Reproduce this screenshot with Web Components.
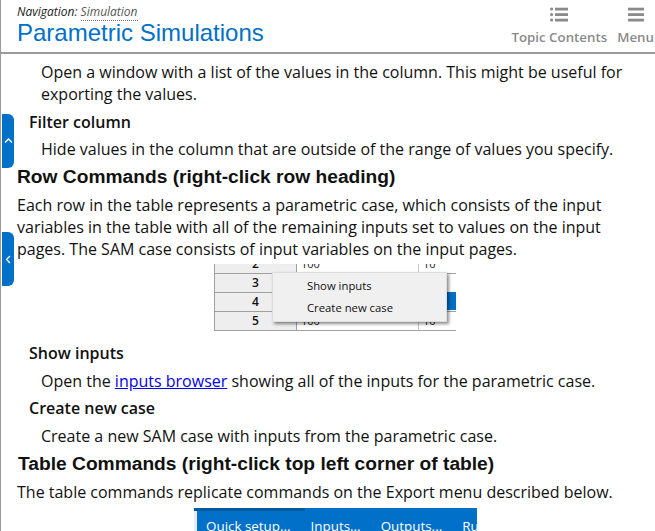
<!DOCTYPE html>
<html>
<head>
<meta charset="utf-8">
<title>Parametric Simulations</title>
<style>
    html, body { margin: 0; padding: 0; height: 100%; overflow: hidden; background: #fff; }
    body { font-family: "Open Sans", sans-serif; color: #111; }
</style>
</head>
<body>
<help-page>
    <help-header slot="header" title="Parametric Simulations" nav="Simulation"></help-header>
    <side-tab dir="up" style="top:114px"></side-tab>
    <side-tab dir="left" style="top:232px"></side-tab>

    <help-dd>Open a window with a list of the values in the column. This might be useful for exporting the values.</help-dd>
    <help-dt style="margin-top:6px">Filter column</help-dt>
    <help-dd style="margin-top:5px">Hide values in the column that are outside of the range of values you specify.</help-dd>
    <help-h2 style="margin-top:5px">Row Commands (right-click row heading)</help-h2>
    <help-p style="margin-top:5px">Each row in the table represents a parametric case, which consists of the input variables in the table with all of the remaining inputs set to values on the input pages. The SAM case consists of input variables on the input pages.</help-p>
    <row-shot style="margin-top:4px"></row-shot>
    <help-dt style="margin-top:9px">Show inputs</help-dt>
    <help-dd style="margin-top:6px">Open the <a href="#">inputs browser</a> showing all of the inputs for the parametric case.</help-dd>
    <help-dt style="margin-top:5px">Create new case</help-dt>
    <help-dd style="margin-top:6px">Create a new SAM case with inputs from the parametric case.</help-dd>
    <help-h2 style="margin-top:5px;padding-left:1px">Table Commands (right-click top left corner of table)</help-h2>
    <help-p style="margin-top:5px">The table commands replicate commands on the Export menu described below.</help-p>
    <toolbar-shot style="margin-top:5px"></toolbar-shot>
</help-page>

<script>
class HelpPage extends HTMLElement {
    constructor() {
        super();
        this.attachShadow({ mode: 'open' });
        this.shadowRoot.innerHTML = `
            <style>
                :host {
                    display: flex;
                    flex-direction: column;
                    position: relative;
                    height: 531px;
                    overflow: hidden;
                    border-left: 1px solid #9a9a9a;
                    box-sizing: border-box;
                }
                .topline {
                    position: absolute;
                    left: -1px;
                    top: 0;
                    width: 1px;
                    height: 52px;
                    background: #5fa3dc;
                }
                .content {
                    flex: 1;
                    overflow: hidden;
                    padding: 7px 16px 0 16px;
                }
            </style>
            <div class="topline"></div>
            <slot name="header"></slot>
            <div class="content"><slot></slot></div>
        `;
    }
}

class HelpHeader extends HTMLElement {
    constructor() {
        super();
        this.attachShadow({ mode: 'open' });
    }

    connectedCallback() {
        const title = this.getAttribute('title');
        const nav = this.getAttribute('nav');
        this.shadowRoot.innerHTML = `
            <style>
                :host {
                    display: flex;
                    justify-content: space-between;
                    height: 52px;
                    border-bottom: 2px solid #9a9a9a;
                    padding-left: 16px;
                    flex: none;
                }
                .nav {
                    font: italic 12px/14px "Open Sans", sans-serif;
                    margin-top: 5px;
                    color: #222;
                }
                .nav span {
                    color: #555;
                    border-bottom: 1px dotted #777;
                }
                h1 {
                    margin: 0;
                    font: normal 24px/28px "Liberation Sans", sans-serif;
                    color: #0070c8;
                }
                .tools {
                    display: flex;
                    gap: 10px;
                    padding-top: 7px;
                    margin-right: 1px;
                }
                .tool {
                    display: flex;
                    flex-direction: column;
                    align-items: center;
                    gap: 6px;
                    font: 600 13.3px/18px "Open Sans", sans-serif;
                    color: #8a8a8a;
                    white-space: nowrap;
                }
                svg { display: block; }
            </style>
            <div>
                <div class="nav">Navigation: <span>${nav}</span></div>
                <h1>${title}</h1>
            </div>
            <div class="tools">
                <div class="tool">
                    <svg width="18" height="15" viewBox="0 0 18 15" fill="#8a8a8a">
                        <circle cx="1.6" cy="2" r="1.6"/><circle cx="1.6" cy="7.5" r="1.6"/><circle cx="1.6" cy="13" r="1.6"/>
                        <rect x="5" y="0.7" width="13" height="2.8"/><rect x="5" y="6.2" width="13" height="2.8"/><rect x="5" y="11.7" width="13" height="2.8"/>
                    </svg>
                    Topic Contents
                </div>
                <div class="tool">
                    <svg width="16" height="15" viewBox="0 0 16 15" fill="#8a8a8a">
                        <rect y="0.7" width="16" height="2.8"/><rect y="6.2" width="16" height="2.8"/><rect y="11.7" width="16" height="2.8"/>
                    </svg>
                    Menu
                </div>
            </div>
        `;
    }
}

class SideTab extends HTMLElement {
    constructor() {
        super();
        this.attachShadow({ mode: 'open' });
    }

    connectedCallback() {
        const d = this.getAttribute('dir') === 'up' ? 'M1 5.5 L4.5 2 L8 5.5' : 'M6 1 L2.5 4.5 L6 8';
        this.shadowRoot.innerHTML = `
            <style>
                :host {
                    position: absolute;
                    left: 1px;
                    width: 12px;
                    height: 54px;
                    background: #0070c8;
                    border-radius: 0 6px 6px 0;
                    display: flex;
                    align-items: center;
                    justify-content: center;
                }
            </style>
            <svg width="9" height="9" viewBox="0 0 9 9" fill="none" stroke="#fff" stroke-width="1.3"><path d="${d}"/></svg>
        `;
    }
}

class HelpP extends HTMLElement {
    constructor() {
        super();
        this.attachShadow({ mode: 'open' });
        this.shadowRoot.innerHTML = `
            <style>
                :host { display: block; font: 16px/22px "Open Sans", sans-serif; color: #111; }
            </style>
            <slot></slot>
        `;
    }
}

class HelpDd extends HelpP {
    constructor() {
        super();
        this.shadowRoot.querySelector('style').textContent = `
            :host { display: block; font: 16px/22px "Open Sans", sans-serif; color: #111; padding-left: 24px; }
        `;
    }
}

class HelpDt extends HTMLElement {
    constructor() {
        super();
        this.attachShadow({ mode: 'open' });
        this.shadowRoot.innerHTML = `
            <style>
                :host { display: block; font: 600 16px/22px "Open Sans", sans-serif; color: #111; padding-left: 12px; }
            </style>
            <slot></slot>
        `;
    }
}

class HelpH2 extends HTMLElement {
    constructor() {
        super();
        this.attachShadow({ mode: 'open' });
        this.shadowRoot.innerHTML = `
            <style>
                :host { display: block; font: bold 19.2px/24px "Liberation Sans", sans-serif; color: #111; white-space: nowrap; }
            </style>
            <slot></slot>
        `;
    }
}

class RowShot extends HTMLElement {
    constructor() {
        super();
        this.attachShadow({ mode: 'open' });
        this.shadowRoot.innerHTML = `
            <style>
                :host {
                    display: block;
                    position: relative;
                    width: 242px;
                    height: 69px;
                    margin-left: 197px;
                    overflow: hidden;
                    font: 12px/18px "Open Sans", sans-serif;
                    color: #111;
                }
                .table { display: grid; grid-template-columns: 82px 122px 38px; margin-top: -9px; border-left: 1px solid #a0a0a0; }
                .table div { height: 18px; border-bottom: 1px solid #a0a0a0; border-right: 1px solid #c8c8c8; font-size: 11px; line-height: 18px; padding-left: 4px; }
                .table .h { background: #eee; font-weight: 600; font-size: 12px; text-align: center; padding: 0; border-right-color: #a0a0a0; }
                .blue { position: absolute; left: 232px; top: 28px; width: 10px; height: 18px; background: #0070c8; }
                .menu {
                    position: absolute;
                    left: 58px;
                    top: 8px;
                    width: 175px;
                    height: 50px;
                    background: #f0f0f0;
                    box-shadow: 2px 2px 3px rgba(0,0,0,0.45);
                    border: 1px solid #ddd;
                    box-sizing: border-box;
                    padding: 2px 0 0 34px;
                    font-size: 11.3px;
                    line-height: 22px;
                }
            </style>
            <div class="table">
                <div class="h">2</div><div>100</div><div>10</div>
                <div class="h">3</div><div></div><div></div>
                <div class="h">4</div><div></div><div></div>
                <div class="h">5</div><div>100</div><div>10</div>
            </div>
            <div class="blue"></div>
            <div class="menu"><div>Show inputs</div><div>Create new case</div></div>
        `;
    }
}

class ToolbarShot extends HTMLElement {
    constructor() {
        super();
        this.attachShadow({ mode: 'open' });
        this.shadowRoot.innerHTML = `
            <style>
                :host {
                    display: flex;
                    gap: 20px;
                    position: relative;
                    width: 283px;
                    height: 40px;
                    margin-left: 177px;
                    box-sizing: border-box;
                    padding: 8px 0 0 12px;
                    background: #0070c8;
                    overflow: hidden;
                    font: 13.4px/20px "Open Sans", sans-serif;
                    color: #fff;
                    white-space: nowrap;
                }
                .tab { position: absolute; left: 0; top: 0; width: 111px; height: 3px; background: #005a9e; }
                .edge { position: absolute; left: 0; top: 3px; width: 3px; bottom: 0; background: #e8eef4; }
            </style>
            <div class="tab"></div>
            <div class="edge"></div>
            <span>Quick setup...</span><span>Inputs...</span><span>Outputs...</span><span>Run</span>
        `;
    }
}

customElements.define('help-page', HelpPage);
customElements.define('help-header', HelpHeader);
customElements.define('side-tab', SideTab);
customElements.define('help-p', HelpP);
customElements.define('help-dd', HelpDd);
customElements.define('help-dt', HelpDt);
customElements.define('help-h2', HelpH2);
customElements.define('row-shot', RowShot);
customElements.define('toolbar-shot', ToolbarShot);
</script>
</body>
</html>
